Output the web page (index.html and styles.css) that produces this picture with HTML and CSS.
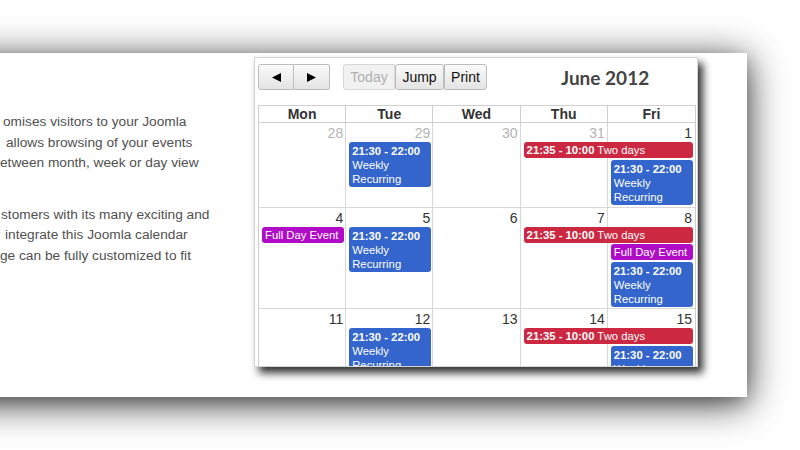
FILE: index.html
```html
<!DOCTYPE html>
<html>
<head>
<meta charset="utf-8">
<link rel="stylesheet" href="styles.css">
</head>
<body>
<div class="stage">
<div class="panel">
  <div class="intro">
    <div class="para">
      <div class="ln i3">omises visitors to your Joomla</div>
      <div class="ln i6">allows browsing of your events</div>
      <div class="ln">etween month, week or day view</div>
    </div>
    <div class="para">
      <div class="ln i1">stomers with its many exciting and</div>
      <div class="ln i5">integrate this Joomla calendar</div>
      <div class="ln">ge can be fully customized to fit</div>
    </div>
  </div>
  <div class="cal">
    <div class="toolbar">
      <div class="group">
        <button class="btn first nav"><svg width="9" height="9" viewBox="0 0 9 9"><polygon points="0,4.5 9,0 9,9" fill="#000"/></svg></button>
        <button class="btn last nav"><svg width="9" height="9" viewBox="0 0 9 9"><polygon points="9,4.5 0,0 0,9" fill="#000"/></svg></button>
      </div>
      <div class="group gap">
        <button class="btn first today">Today</button>
        <button class="btn jump">Jump</button>
        <button class="btn last print">Print</button>
      </div>
      <div class="title">June 2012</div>
    </div>
    <div class="table">
      <div class="head">
        <div class="hc">Mon</div>
        <div class="hc">Tue</div>
        <div class="hc">Wed</div>
        <div class="hc">Thu</div>
        <div class="hc last">Fri</div>
      </div>
      <div class="week w1">
        <div class="bg c1"></div><div class="bg c2"></div><div class="bg c3"></div><div class="bg c4"></div><div class="bg c5 lastbg"></div>
        <div class="num c1 other">28</div>
        <div class="num c2 other">29</div>
        <div class="num c3 other">30</div>
        <div class="num c4 other">31</div>
        <div class="num c5">1</div>
        <div class="ev blue c2 rl"><b>21:30 - 22:00</b><br>Weekly<br>Recurring</div>
        <div class="ev red c45 r2"><b>21:35 - 10:00</b> Two days</div>
        <div class="ev blue c5 r3"><b>21:30 - 22:00</b><br>Weekly<br>Recurring</div>
      </div>
      <div class="week w2">
        <div class="bg c1"></div><div class="bg c2"></div><div class="bg c3"></div><div class="bg c4"></div><div class="bg c5 lastbg"></div>
        <div class="num c1">4</div>
        <div class="num c2">5</div>
        <div class="num c3">6</div>
        <div class="num c4">7</div>
        <div class="num c5">8</div>
        <div class="ev purple c1 r2">Full Day Event</div>
        <div class="ev blue c2 rl"><b>21:30 - 22:00</b><br>Weekly<br>Recurring</div>
        <div class="ev red c45 r2"><b>21:35 - 10:00</b> Two days</div>
        <div class="ev purple c5 r3">Full Day Event</div>
        <div class="ev blue c5 r4"><b>21:30 - 22:00</b><br>Weekly<br>Recurring</div>
      </div>
      <div class="week w3">
        <div class="bg c1"></div><div class="bg c2"></div><div class="bg c3"></div><div class="bg c4"></div><div class="bg c5 lastbg"></div>
        <div class="num c1">11</div>
        <div class="num c2">12</div>
        <div class="num c3">13</div>
        <div class="num c4">14</div>
        <div class="num c5">15</div>
        <div class="ev blue c2 rl"><b>21:30 - 22:00</b><br>Weekly<br>Recurring</div>
        <div class="ev red c45 r2"><b>21:35 - 10:00</b> Two days</div>
        <div class="ev blue c5 r3"><b>21:30 - 22:00</b><br>Weekly<br>Recurring</div>
      </div>
    </div>
  </div>
</div>
</div>
</body>
</html>
```
FILE: styles.css
```css
html, body {
  margin: 0;
  padding: 0;
  background: #fff;
  overflow: hidden;
  font-family: "Liberation Sans", Arial, sans-serif;
}
.stage {
  width: 800px;
  height: 450px;
  padding-top: 53px;
  box-sizing: border-box;
  overflow: hidden;
  background: #fff;
}
.panel {
  display: flex;
  align-items: flex-start;
  margin-left: -60px;
  width: 807px;
  height: 344px;
  background: #fff;
  box-shadow: 0 6px 36px rgba(0, 0, 0, 0.8), 0 5px 14px rgba(0, 0, 0, 0.18);
}
.intro {
  width: 314px;
  flex: none;
  box-sizing: border-box;
  padding: 59px 0 0 60px;
  overflow: hidden;
  color: #505050;
  font-size: 13.7px;
  line-height: 20.5px;
  white-space: nowrap;
}
.para + .para { margin-top: 31px; }
.i1 { padding-left: 1px; }
.i3 { padding-left: 3px; }
.i5 { padding-left: 5px; }
.i6 { padding-left: 6px; }

.cal {
  flex: none;
  margin-top: 4px;
  box-sizing: border-box;
  width: 444px;
  height: 310px;
  border: 1px solid #d4d4d4;
  padding: 6px 1px 0 3px;
  background: #fff;
  overflow: hidden;
  box-shadow: 5px 6px 8px rgba(0, 0, 0, 0.8);
}
.toolbar {
  display: flex;
  align-items: center;
  height: 26px;
}
.group { display: flex; }
.group.gap { margin-left: 13px; }
.btn {
  height: 26px;
  margin: 0;
  border: 1px solid #bdbdbd;
  background: linear-gradient(#fafafa, #e4e4e4);
  font-family: "Liberation Sans", Arial, sans-serif;
  font-size: 14px;
  color: #111;
  padding: 0;
  display: flex;
  align-items: center;
  justify-content: center;
  box-sizing: border-box;
}
.btn.first { border-radius: 3px 0 0 3px; }
.btn.last { border-radius: 0 3px 3px 0; }
.nav { width: 36px; }
.nav.last { width: 36px; border-left: none; }
.today { width: 52px; color: #b0b0b0; background: #f1f1f1; border-color: #d8d8d8; }
.jump { width: 49px; border-radius: 3px; }
.print { width: 43px; border-radius: 3px; }
.title {
  margin-left: 74px;
  font-family: Lato, "Open Sans", sans-serif;
  font-weight: 700;
  font-size: 19px;
  color: #444;
  line-height: 26px;
  padding-top: 2px;
}

.table {
  margin-top: 15px;
  width: 438px;
  border-left: 1px solid #cfcfcf;
  border-right: 1px solid #cfcfcf;
  box-sizing: border-box;
}
.head {
  display: grid;
  grid-template-columns: repeat(5, 1fr);
  border-top: 1px solid #cfcfcf;
  border-bottom: 1px solid #cfcfcf;
}
.hc {
  text-align: center;
  font-weight: 700;
  font-size: 14px;
  line-height: 16px;
  color: #333;
  border-right: 1px solid #cfcfcf;
}
.hc.last { border-right: none; }
.week {
  display: grid;
  grid-template-columns: repeat(5, 1fr);
  border-bottom: 1px solid #d8d8d8;
  box-sizing: border-box;
}
.w1 { height: 85px; grid-template-rows: 19px 18px 48px 0px; }
.w2 { height: 101px; grid-template-rows: 19px 17px 18px 46px 0px; }
.w3 { height: 120px; grid-template-rows: 19px 18px 48px 0px; }
.bg {
  grid-row: 1 / -1;
  border-right: 1px solid #d8d8d8;
}
.bg.lastbg { border-right: none; }
.c1 { grid-column: 1; }
.c2 { grid-column: 2; }
.c3 { grid-column: 3; }
.c4 { grid-column: 4; }
.c5 { grid-column: 5; }
.c45 { grid-column: 4 / 6; }
.num {
  grid-row: 1;
  text-align: right;
  font-size: 14px;
  line-height: 17px;
  padding: 2px 3px 0 0;
  color: #333;
}
.num.other { color: #b4b4b4; }
.r2 { grid-row: 2; }
.r3 { grid-row: 3; }
.r4 { grid-row: 4; }
.rl { grid-row: 2 / -1; }
.ev {
  align-self: start;
  margin: 0 2px 2px 3px;
  border-radius: 3px;
  color: #fff;
  font-size: 11.3px;
  line-height: 14px;
  padding: 1px 3px;
  white-space: nowrap;
  overflow: hidden;
}
.ev b { font-weight: 700; }
.blue { background: #3465cc; padding: 2px 3px 1px; }
.red { background: #cc2841; }
.purple { background: #b00cc8; }
```
